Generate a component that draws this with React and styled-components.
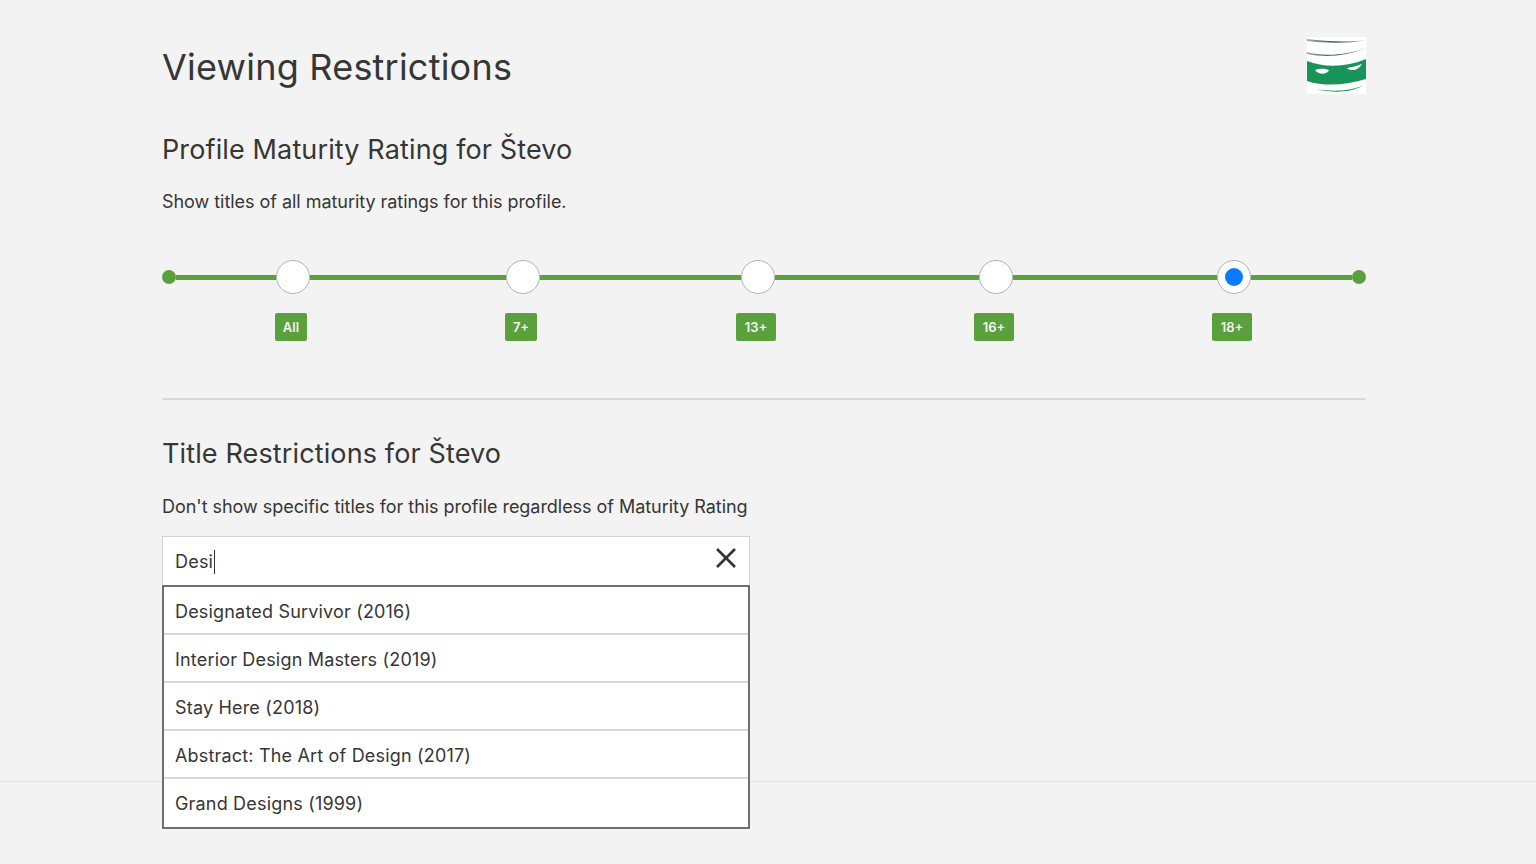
import React from 'react';
import styled, { createGlobalStyle } from 'styled-components';

const Global = createGlobalStyle`
  html, body { margin: 0; padding: 0; background: #f3f3f3; }
  body { font-family: Inter, "Liberation Sans", sans-serif; color: #333; overflow: hidden; }
`;
const Page = styled.div`
  width: 1536px; height: 864px; display: flex; flex-direction: column; background: #f3f3f3;
`;
const Main = styled.main`
  width: 1204px; height: 781px; box-sizing: border-box; margin-left: 162px; padding-top: 37px;
  display: flex; flex-direction: column; flex-shrink: 0;
`;
const Header = styled.header`
  display: flex; justify-content: space-between; align-items: flex-start; height: 58px;
`;
const Title = styled.h1`
  margin: 0; font-size: 36px; line-height: 60px; font-weight: 400; color: #363636; letter-spacing: 0.22px;
`;
const SectionTitle = styled.h2`
  margin: 0; font-size: 27px; line-height: 40px; font-weight: 400; color: #363636; letter-spacing: 0.13px;
  margin-top: ${p => p.$top}px;
`;
const Description = styled.p`
  margin: ${p => p.$top}px 0 0; font-size: 18px; line-height: 24px; color: #363636; letter-spacing: -0.04px;
`;
const Scale = styled.div`
  display: flex; align-items: flex-start; margin-top: 46px; height: 120px;
`;
const Rail = styled.div`
  height: 34px; display: flex; align-items: center; flex-shrink: 0;
`;
const EndDot = styled.span`
  display: block; width: 14px; height: 14px; border-radius: 50%; background: #5aa13e;
`;
const Line = styled.span`
  display: block; height: 5px; background: #5aa13e; width: 100%; margin-top: 1px;
`;
const Stop = styled.div`
  width: 34px; flex-shrink: 0; display: flex; flex-direction: column; align-items: center;
`;
const Thumb = styled.span`
  box-sizing: border-box; width: 34px; height: 34px; border-radius: 50%; background: #fff;
  border: 1px solid #b3b3b3; display: flex; align-items: center; justify-content: center;
`;
const Selected = styled.span`
  width: 18px; height: 18px; border-radius: 50%; background: #0a7bff;
`;
const Badge = styled.span`
  margin-top: 19px; margin-right: 4px; flex-shrink: 0; height: 28px; width: ${p => p.$w}px; border-radius: 2px; background: #5aa13e;
  color: #f3f3f3; font-size: 13px; font-weight: 600; line-height: 28px; text-align: center;
`;
const Divider = styled.hr`
  margin: 18px 0 0; border: 0; height: 2px; background: #d9d9d9;
`;
const Search = styled.div`
  position: relative; width: 588px; box-sizing: border-box; margin-top: 17px; height: 50px;
  background: #fff; border: 1px solid #d2d2d2; display: flex; align-items: center; justify-content: space-between;
  padding: 0 13px 0 12px;
`;
const Query = styled.span`
  font-size: 18px; line-height: 24px; color: #363636; display: flex; align-items: center; margin-top: 1px; letter-spacing: 0.2px;
`;
const Caret = styled.span`
  display: inline-block; width: 1px; height: 24px; background: #333; margin-left: 1px;
`;
const Close = styled.button`
  border: 0; padding: 0; background: none; display: flex; margin-top: -6px; cursor: pointer;
`;
const Results = styled.ul`
  position: absolute; left: -1px; top: 48px; width: 588px; box-sizing: border-box; margin: 0; padding: 0; list-style: none;
  background: #fff; border: 2px solid #6e6e6e;
`;
const Result = styled.li`
  box-sizing: border-box; height: 48px; padding: 0 11px; font-size: 18px; line-height: 49px; color: #363636; letter-spacing: 0.18px;
  border-bottom: 2px solid #d9d9d9;
  &:last-child { border-bottom: 0; height: 48px; }
`;
const Footer = styled.footer`
  border-top: 1px solid #e6e6e6; flex: 1;
`;

const Logo = () => (
  <svg width="59" height="57" viewBox="0 0 59 57" style={{ display: 'block' }}>
    <defs>
      <linearGradient id="stripe" x1="0" x2="1" y1="0" y2="0">
        <stop offset="0" stopColor="#a9aeab" />
        <stop offset="0.45" stopColor="#4a5650" />
        <stop offset="1" stopColor="#5d6b63" />
      </linearGradient>
    </defs>
    <rect width="59" height="57" fill="#fff" />
    <path d="M0 2 C18 4 40 6 59 3 C40 7 18 6 0 4Z" fill="url(#stripe)" />
    <path d="M0 15 C18 20 40 18 59 11 C40 19 18 21 0 17Z" fill="url(#stripe)" />
    <path d="M0 24 C18 31 40 30 59 22 L59 42 C40 48 18 50 0 44Z" fill="#18945a" />
    <path d="M8 33 C13 31 18 32 22 33 C20 38 11 38 8 33Z" fill="#fff" />
    <path d="M40 31 C45 30 50 29 55 27 C52 33 44 35 40 31Z" fill="#fff" />
    <path d="M9 52 C25 55 43 54 55 49 C43 56 25 56 9 52Z" fill="#18945a" />
  </svg>
);

const stops = [
  { label: 'All', gap: 100, w: 32 },
  { label: '7+', gap: 196, w: 32 },
  { label: '13+', gap: 201, w: 40 },
  { label: '16+', gap: 204, w: 40 },
  { label: '18+', gap: 204, w: 40, on: true },
];
const results = [
  'Designated Survivor (2016)',
  'Interior Design Masters (2019)',
  'Stay Here (2018)',
  'Abstract: The Art of Design (2017)',
  'Grand Designs (1999)',
];

export default function App() {
  return (
    <Page>
      <Global />
      <Main>
        <Header>
          <Title>Viewing Restrictions</Title>
          <Logo />
        </Header>
        <SectionTitle $top={35}>Profile Maturity Rating for Števo</SectionTitle>
        <Description $top={20}>Show titles of all maturity ratings for this profile.</Description>
        <Scale>
          <Rail><EndDot /></Rail>
          {stops.map(s => (
            <React.Fragment key={s.label}>
              <Rail style={{ width: s.gap }}><Line /></Rail>
              <Stop>
                <Thumb>{s.on && <Selected />}</Thumb>
                <Badge $w={s.w}>{s.label}</Badge>
              </Stop>
            </React.Fragment>
          ))}
          <Rail style={{ width: 101 }}><Line /></Rail>
          <Rail><EndDot /></Rail>
        </Scale>
        <Divider />
        <SectionTitle $top={34}>Title Restrictions for Števo</SectionTitle>
        <Description $top={21}>Don't show specific titles for this profile regardless of Maturity Rating</Description>
        <Search>
          <Query>Desi<Caret /></Query>
          <Close aria-label="Clear">
            <svg width="20" height="20" viewBox="0 0 20 20" fill="none" stroke="#333" strokeWidth="2.6">
              <path d="M1 1 L19 19 M19 1 L1 19" />
            </svg>
          </Close>
          <Results>
            {results.map(r => <Result key={r}>{r}</Result>)}
          </Results>
        </Search>
      </Main>
      <Footer />
    </Page>
  );
}
